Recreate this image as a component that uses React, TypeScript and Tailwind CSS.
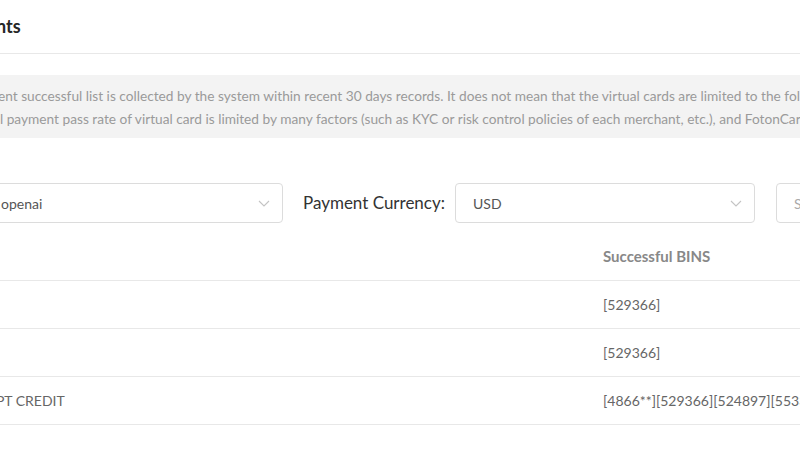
import React from 'react';

const Chevron = () => (
  <svg width="12" height="7" viewBox="0 0 12 7" fill="none" className="shrink-0">
    <polyline points="1,1 6,6 11,1" stroke="#c4c4c4" strokeWidth="1.1" />
  </svg>
);

const Select = ({ value, placeholder }: { value?: string; placeholder?: string }) => (
  <div className="w-[300px] h-[40px] shrink-0 flex items-center justify-between pl-[17px] pr-[12px] border border-[#dcdcdc] rounded-[4px] bg-white">
    <span className={value ? 'text-[14px] text-[#555]' : 'text-[14px] text-[#aaa]'}>{value ?? placeholder}</span>
    <Chevron />
  </div>
);

const FilterLabel = ({ children }: { children: React.ReactNode }) => (
  <div className="w-[172px] shrink-0 text-right pr-[10px] text-[17px] text-[#333] whitespace-nowrap">{children}</div>
);

const PaymentsPage = () => {
  // Card bins that went through for each merchant in the last 30 days
  const rows = [
    { id: 1, merchant: 'OPENAI', bins: '[529366]' },
    { id: 2, merchant: 'OPENAI LLC', bins: '[529366]' },
    { id: 3, merchant: 'OPENAI *CHATGPT CREDIT', bins: '[4866**][529366][524897][553370]' },
  ];

  return (
    <div className="w-[800px] h-[449px] overflow-hidden bg-white font-['Lato',sans-serif]">
      <div className="-ml-[189px] w-[1400px]">
        {/* Header */}
        <div className="h-[54px] flex items-center border-b border-[#e8e8e8] pl-[131px]">
          <h1 className="text-[18px] font-bold text-[#262626]">Payments</h1>
        </div>

        {/* Notice */}
        <div className="mt-[21px] bg-[#f3f3f3] pt-[9px] pb-[8px] pl-[154px] text-[13.7px] leading-[23px] text-[#9a9a9a] whitespace-nowrap">
          <p>Payment successful list is collected by the system within recent 30 days records. It does not mean that the virtual cards are limited to the following BINs, please refer to the actual situation.</p>
          <p>Actual payment pass rate of virtual card is limited by many factors (such as KYC or risk control policies of each merchant, etc.), and FotonCard cannot guarantee the success of every payment.</p>
        </div>

        {/* Filters */}
        <div className="mt-[45px] flex items-center">
          <FilterLabel>Merchant:</FilterLabel>
          <Select value="openai" />
          <FilterLabel>Payment Currency:</FilterLabel>
          <Select value="USD" />
          <div className="w-[21px] shrink-0" />
          <Select placeholder="Select card type" />
        </div>

        {/* Table */}
        <div className="mt-[10px] text-[14px]">
          <div className="grid grid-cols-[61px_715px_1fr] h-[48px] items-center border-b border-[#e8e8e8] font-bold text-[#888]">
            <div className="px-4">No.</div>
            <div className="px-4">Merchant</div>
            <div className="px-4 text-[15px]">Successful BINS</div>
          </div>
          {rows.map((row) => (
            <div key={row.id} className="grid grid-cols-[61px_715px_1fr] h-[48px] items-center border-b border-[#e8e8e8] text-[#666]">
              <div className="px-4">{row.id}</div>
              <div className="px-4 whitespace-nowrap">{row.merchant}</div>
              <div className="px-4 whitespace-nowrap">{row.bins}</div>
            </div>
          ))}
        </div>
      </div>
    </div>
  );
};

export default PaymentsPage;
